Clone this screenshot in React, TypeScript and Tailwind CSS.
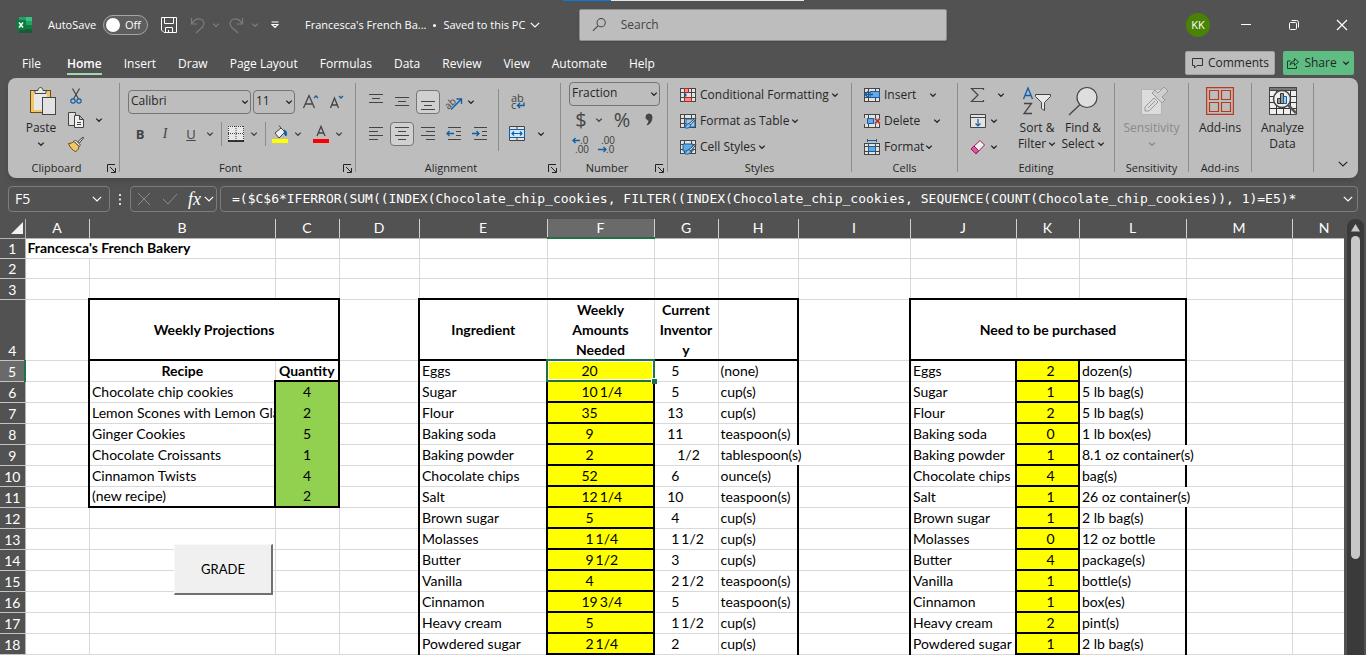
import React from "react";

const ICON = "#444444";
const BLUE = "#0f5ea8";

function Chevron({ className = "", size = 8 }: { className?: string; size?: number }) {
  return (
    <svg className={"shrink-0 " + className} width={size} height={size} viewBox="0 0 8 8" fill="none" stroke="currentColor" strokeWidth={size > 8 ? 0.8 : 1.3} aria-hidden="true">
      <path d="M1.2 2.6 4 5.3 6.8 2.6" />
    </svg>
  );
}

function Svg({ w = 16, h = 16, className = "", children }: { w?: number; h?: number; className?: string; children: React.ReactNode }) {
  return (
    <svg className={"shrink-0 overflow-visible " + className} width={w} height={h} viewBox={`0 0 ${w} ${h}`} fill="none" stroke={ICON} strokeWidth="1" aria-hidden="true">
      {children}
    </svg>
  );
}

function Tool({ label, className = "", children }: { label: string; className?: string; children: React.ReactNode }) {
  return (
    <button type="button" aria-label={label} className={"flex shrink-0 items-center justify-center " + className}>
      {children}
    </button>
  );
}

function TitleBar() {
  return (
    <header className="relative flex h-12 items-center pl-4 pt-0.5 text-xs">
      <div className="absolute left-[563px] top-0 flex h-px w-[241px]">
        <div className="w-12 bg-[#0a78d4]" />
        <div className="flex-1 bg-[#e6e6e6]" />
      </div>
      <svg width="16" height="16" viewBox="0 0 16 16" aria-hidden="true">
        <path d="M3 0h6.500v4H3z" fill="#21a366" />
        <path d="M9.500 0H16v4H9.500z" fill="#33c481" />
        <path d="M3 4h6.500v4H3z" fill="#107c41" />
        <path d="M9.500 4H16v4H9.500z" fill="#21a366" />
        <path d="M3 8h6.500v4H3z" fill="#185c37" />
        <path d="M9.500 8H16v4H9.500z" fill="#107c41" />
        <path d="M3 12h13v4H3z" fill="#185c37" />
        <rect x="0" y="3" width="10" height="10" rx="1" fill="#0f7a40" />
        <path d="M3 5.500 7 10.500M7 5.500 3 10.500" stroke="#fff" strokeWidth="1.500" />
      </svg>
      <label htmlFor="autosave" className="ml-4 w-[55px] whitespace-nowrap text-[11px]">AutoSave</label>
      <button id="autosave" type="button" role="switch" aria-checked="false" className="flex h-5 w-[45px] items-center rounded-full border border-[#a6a6a6] bg-[#5e5e5e] pl-0.5">
        <span className="size-[14px] rounded-full bg-white" />
        <span className="ml-[5px] text-[11px]">Off</span>
      </button>
      <Tool label="Save" className="ml-[13px]">
        <svg width="16" height="16" viewBox="0 0 16 16" fill="none" stroke="#fff" aria-hidden="true">
          <path d="M.5.500h15v15H3L.5 13zM3.500.500v6h9v-6M4.500 15.500v-5h7v5M7.500 13v2.500" />
        </svg>
      </Tool>
      <Tool label="Undo" className="ml-[13px] gap-[7px] text-[#7c7c7c]">
        <svg width="15" height="17" viewBox="0 0 15 17" fill="none" stroke="currentColor" strokeWidth="1.200" aria-hidden="true">
          <path d="M1.500 1v6h6M1.500 7C4 3 7 1.500 10 2c4 1 5 5 2.500 8L6 16" />
        </svg>
        <Chevron />
      </Tool>
      <Tool label="Redo" className="ml-[9px] gap-[7px] text-[#7c7c7c]">
        <svg width="15" height="17" viewBox="0 0 15 17" fill="none" stroke="currentColor" strokeWidth="1.200" aria-hidden="true">
          <path d="M13.500 1v6h-6M13.500 7C11 3 8 1.500 5 2 1 3 0 7 2.500 10L9 16" />
        </svg>
        <Chevron />
      </Tool>
      <Tool label="Customize quick access toolbar" className="ml-3">
        <svg width="8" height="8" viewBox="0 0 8 8" fill="none" stroke="#fff" strokeWidth="1.200" aria-hidden="true">
          <path d="M.5 1h7M1 3.500l3 3 3-3z" />
        </svg>
      </Tool>
      <button type="button" className="ml-[26px] flex w-[242px] items-center whitespace-nowrap text-[11px]">
        Francesca's French Ba...<span className="mx-[7px] size-[3px] rounded-full bg-white" />Saved to this PC
        <Chevron size={12} className="ml-1" />
      </button>
      <label className="ml-8 flex h-8 w-[368px] items-center gap-3.5 rounded-xs border border-[#8e8e8e] bg-[#bdbdbd] px-3 text-[#444] shadow-sm">
        <svg width="16" height="16" viewBox="0 0 16 16" fill="none" stroke="#444" strokeWidth="1.100" aria-hidden="true">
          <circle cx="10" cy="5.500" r="4.500" />
          <path d="M6.500 9 1 14.500" />
        </svg>
        <input type="search" aria-label="Search" placeholder="Search" className="w-full bg-transparent text-xs placeholder:text-[#444] focus:outline-none" />
      </label>
      <div className="ml-auto flex items-center">
        <button type="button" className="mr-[30px] size-6 rounded-full bg-[#498205] text-[11px]">KK</button>
        <Tool label="Minimize" className="mr-8">
          <svg width="12" height="12" viewBox="0 0 12 12" stroke="#fff" aria-hidden="true"><path d="M1 5.500h10" /></svg>
        </Tool>
        <Tool label="Restore" className="ml-1 mr-9">
          <svg width="12" height="12" viewBox="0 0 12 12" fill="none" stroke="#fff" aria-hidden="true">
            <rect x="1.500" y="3.500" width="7" height="7" rx="1" />
            <path d="M3.500 1.500h5a2 2 0 0 1 2 2v5" />
          </svg>
        </Tool>
        <Tool label="Close" className="mr-[18px]">
          <svg width="12" height="12" viewBox="0 0 12 12" stroke="#fff" strokeWidth="1.200" aria-hidden="true"><path d="m1 1 10 10M11 1 1 11" /></svg>
        </Tool>
      </div>
    </header>
  );
}

const TABS = ["File", "Home", "Insert", "Draw", "Page Layout", "Formulas", "Data", "Review", "View", "Automate", "Help"];

function TabBar() {
  return (
    <nav className="flex h-[30px] items-center gap-[22px] pl-[22px] text-xs">
      {TABS.map((tab) =>
        tab === "Home" ? (
          <button key={tab} type="button" className="ml-1 h-6 border-b-2 border-[#9fd9b4] pt-1 font-semibold">{tab}</button>
        ) : (
          <button key={tab} type="button" className="h-6 whitespace-nowrap border-b-2 border-transparent pt-1">{tab}</button>
        ),
      )}
      <div className="ml-auto flex gap-2 pr-3 text-[#262626]">
        <button type="button" className="flex h-6 items-center gap-1 rounded-xs border border-[#a2a2a2] bg-[#bdbdbd] px-[5px]">
          <svg width="13" height="12" viewBox="0 0 13 12" fill="none" stroke="#333" aria-hidden="true"><path d="M1.500 1.500h10v7H6l-2.500 2.500V8.500h-2z" /></svg>
          Comments
        </button>
        <button type="button" className="flex h-6 w-[71px] items-center justify-between rounded-xs bg-[#5fbc82] px-1">
          <svg width="12" height="12" viewBox="0 0 12 12" fill="none" stroke="#1d3b29" aria-hidden="true">
            <path d="M3.500 4H.5v7.500h9V9M3 8c.5-3 2-4 4.500-4V1.500l4 3.500-4 3.500V6C5.500 6 4 6.500 3 8z" />
          </svg>
          Share
          <Chevron />
        </button>
      </div>
    </nav>
  );
}

function Group({ name, className, launcher = false, children }: { name: string; className: string; launcher?: boolean; children?: React.ReactNode }) {
  return (
    <>
      <section aria-label={name} className={"flex shrink-0 flex-col " + className}>
        <div className="h-20">{children}</div>
        <div className="flex h-5 items-center text-[11px]">
          <span className="flex-1 text-center">{name}</span>
          {launcher && (
            <Tool label={name + " settings"} className="mr-0.5 w-3">
              <Svg w={9} h={9}>
                <path d="M.5 8V.5H8M3 3l5 5M8.500 4v4.500H4" stroke="#222" />
              </Svg>
            </Tool>
          )}
        </div>
      </section>
      <div className="mt-[5px] h-[89px] w-px shrink-0 bg-[#8c8c8c]" />
    </>
  );
}

function Combo({ label, value, className }: { label: string; value: string; className: string }) {
  return (
    <div className={"relative h-6 " + className}>
      <select aria-label={label} defaultValue={value} className="block size-full appearance-none rounded-[4px] border border-[#757575] bg-transparent pb-0.5 pl-0.5 text-xs">
        <option>{value}</option>
      </select>
      <Chevron className="pointer-events-none absolute right-0.5 top-2" />
    </div>
  );
}

function BigButton({ lines, chevron = false, className = "", icon }: { lines: string[]; chevron?: boolean; className?: string; icon: React.ReactNode }) {
  return (
    <button type="button" className={"flex flex-col items-center pt-2 text-xs leading-4 " + className}>
      <span className="mb-1 flex h-[30px] items-center">{icon}</span>
      {lines.map((line, i) => (
        <span key={line} className="flex items-center gap-0.5 whitespace-nowrap">
          {line}
          {chevron && i > 0 && <Chevron />}
        </span>
      ))}
      {chevron && lines.length === 1 && <Chevron className="mt-1" />}
    </button>
  );
}

function Bars({ kind }: { kind: "left" | "center" | "right" | "top" | "middle" | "bottom" }) {
  const paths = {
    left: "M1 1.500h14M1 5.500h9M1 9.500h14M1 13.500h9",
    center: "M1 1.500h14M4 5.500h8M1 9.500h14M4 13.500h8",
    right: "M1 1.500h14M6 5.500h9M1 9.500h14M6 13.500h9",
    top: "M1 .5h14M4 4.500h8M1 8.500h14",
    middle: "M1 3.500h14M4 7.500h8M1 11.500h14",
    bottom: "M1 7.500h14M4 11.500h8M1 15.500h14",
  };
  return <Svg><path d={paths[kind]} /></Svg>;
}

function Indent({ flip = false }: { flip?: boolean }) {
  return (
    <Svg>
      <path d="M2 1.500h13M10 5.500h5M10 9.500h5M2 13.500h13" />
      <path d={flip ? "M0 7.500h7M4.500 5 7 7.500 4.500 10" : "M8 7.500H1M3.500 5 1 7.500 3.500 10"} stroke={BLUE} strokeWidth="1.300" />
    </Svg>
  );
}

function GridIcon({ children }: { children?: React.ReactNode }) {
  return (
    <Svg>
      <rect x=".5" y="1.500" width="15" height="13" fill="#e3e3e3" />
      <path d="M.5 5.500h15M.5 10.500h15M4.500 1.500v13M11.500 1.500v13" />
      {children}
    </Svg>
  );
}

function Brush() {
  return (
    <>
      <path d="M15.500 5 9 10.500l1.500 1.500L16 6z" fill="#ddd" stroke="#444" />
      <path d="M9 10.500c-3 0-2 3-4.500 4 3 1.500 6 0 6-2.500z" fill="#8ec0ea" stroke={BLUE} />
    </>
  );
}

function ListButton({ text, icon, chevronClass = "ml-0.5" }: { text: string; icon: React.ReactNode; chevronClass?: string }) {
  return (
    <button type="button" className="flex h-[26px] items-center whitespace-nowrap text-xs">
      {icon}
      <span className="ml-1">{text}</span>
      <Chevron className={chevronClass} />
    </button>
  );
}

const divider = "h-6 w-px bg-[#8c8c8c]";

function Ribbon() {
  return (
    <div className="mx-2 flex h-[100px] rounded-lg bg-[#bdbdbd] text-[#262626] shadow-md">
      <Group name="Clipboard" launcher className="w-[111px]">
        <div className="flex pl-[17px]">
          <BigButton
            lines={["Paste"]}
            chevron
            className="w-8"
            icon={
              <Svg w={28} h={30} className="ml-1">
                <rect x="1.500" y="4.500" width="20" height="22" fill="#f4c66a" stroke="#6b4c16" />
                <rect x="5" y="6" width="13" height="18" fill="#e8e8e8" stroke="none" />
                <path d="M6 7.500v-3h3c0-4 5-4 5 0h3v3z" fill="#e8e8e8" />
                <rect x="13.500" y="11.500" width="13" height="17" fill="#e3e3e3" />
              </Svg>
            }
          />
          <div className="ml-[11px] flex flex-col gap-2 pt-[10px]">
            <Tool label="Cut">
              <Svg>
                <path d="m4.500.5 6 10.500M11.500.5 5.500 11" strokeWidth="1.200" />
                <circle cx="5" cy="13" r="2.200" stroke={BLUE} strokeWidth="1.200" />
                <circle cx="11" cy="13" r="2.200" stroke={BLUE} strokeWidth="1.200" />
              </Svg>
            </Tool>
            <Tool label="Copy">
              <Svg>
                <path d="M.5.500h7v13h-7z" fill="#e3e3e3" />
                <path d="M6.500 3.500h5l4 4v8h-9zM11.500 3.500v4h4M9 10.500h4M9 12.500h4" fill="#efefef" />
              </Svg>
            </Tool>
            <Tool label="Format painter">
              <Svg>
                <path d="M15 1 10 5.500 11.500 7 15.500 2z" fill="#ddd" />
                <path d="m7.500 4 5 5L11 10.500l-5-5z" fill="#efefef" />
                <path d="M6 5.500c-2 1.500-3.500 2-5.500 2C2 12 5 14.500 7.500 15.500c2.500-1 3-3 3.500-5z" fill="#f4c66a" stroke="#6b4c16" />
              </Svg>
            </Tool>
          </div>
          <Tool label="Copy options" className="ml-[11px] h-[84px]"><Chevron /></Tool>
        </div>
      </Group>

      <Group name="Font" launcher className="w-[235px]">
        <div className="flex items-center gap-0.5 pl-2 pt-3">
          <Combo label="Font name" value="Calibri" className="w-[123px]" />
          <Combo label="Font size" value="11" className="w-[42px]" />
          <Tool label="Increase font size" className="ml-1.5">
            <Svg>
              <path d="M.5 14 6 1.500 11.500 14M2.500 10h7" strokeWidth="1.300" />
              <path d="m11 4 2-2 2 2" stroke={BLUE} strokeWidth="1.300" />
            </Svg>
          </Tool>
          <Tool label="Decrease font size" className="ml-2">
            <Svg>
              <path d="M1.500 14 5.500 4l4 10M3 11h5" strokeWidth="1.300" />
              <path d="m10 2 2 2 2-2" stroke={BLUE} strokeWidth="1.300" />
            </Svg>
          </Tool>
        </div>
        <div className="flex h-10 items-center pl-3 text-sm text-[#444]">
          <button type="button" className="w-4 text-[13px] font-bold">B</button>
          <button type="button" className="ml-[9px] w-4 font-['Liberation_Serif',serif] italic">I</button>
          <button type="button" className="ml-[10px] w-4 text-[13px] underline">U</button>
          <Chevron className="ml-[7px]" />
          <div className={"ml-[7px] " + divider} />
          <Tool label="Borders" className="ml-1.5">
            <Svg>
              <rect width="16" height="15" fill="#e8e8e8" stroke="none" />
              <path d="M0 .5h16M.5 0v15M15.500 0v15M8 0v15M0 7.500h16" strokeDasharray="1 1" />
              <path d="M0 15h16" stroke="#000" strokeWidth="1.500" />
            </Svg>
          </Tool>
          <Chevron className="ml-1.5" />
          <div className={"ml-[7px] " + divider} />
          <Tool label="Fill color" className="ml-1.5">
            <Svg h={18}>
              <path d="m3 8 6-5 4 4-6 6zM9 3 7 .500" fill="#eee" />
              <path d="M12 5c3 1 3 4 2 6-1.500-1-1.500-3-2-6z" fill={BLUE} stroke={BLUE} />
              <rect y="14" width="16" height="4" fill="#ff0" stroke="none" />
            </Svg>
          </Tool>
          <Chevron className="ml-1.5" />
          <Tool label="Font color" className="ml-[11px]">
            <Svg h={18}>
              <path d="M4 11 8 1.500 12 11M5.500 8h5" strokeWidth="1.300" />
              <rect y="14" width="16" height="4" fill="#f00" stroke="none" />
            </Svg>
          </Tool>
          <Chevron className="ml-1.5" />
        </div>
      </Group>

      <Group name="Alignment" launcher className="w-[204px]">
        <div className="flex pl-[7px] pt-2">
          <div className="grid grid-cols-[repeat(5,26px)] grid-rows-[32px_32px] place-items-center">
            <Tool label="Top align"><Bars kind="top" /></Tool>
            <Tool label="Middle align"><Bars kind="middle" /></Tool>
            <Tool label="Bottom align" className="size-6 rounded-[4px] border border-[#757575] bg-[#d0d0d0]"><Bars kind="bottom" /></Tool>
            <Tool label="Orientation">
              <Svg>
                <text x="-2" y="13" fontSize="10" fill={ICON} stroke="none" transform="rotate(-42 4 9)" fontFamily="Open Sans">ab</text>
                <path d="M5 15.500 15 5.500M10.500 5H15.500V10" stroke={BLUE} strokeWidth="1.300" />
              </Svg>
            </Tool>
            <Chevron className="justify-self-start" />
            <Tool label="Align left"><Bars kind="left" /></Tool>
            <Tool label="Center" className="size-6 rounded-[4px] border border-[#757575] bg-[#d0d0d0]"><Bars kind="center" /></Tool>
            <Tool label="Align right"><Bars kind="right" /></Tool>
            <Tool label="Decrease indent"><Indent /></Tool>
            <Tool label="Increase indent"><Indent flip /></Tool>
          </div>
          <div className="ml-[5px] mt-[3px] h-[62px] w-px bg-[#8c8c8c]" />
          <div className="ml-[10px]">
            <Tool label="Wrap text" className="h-8">
              <Svg>
                <text fontSize="11" fill={ICON} stroke="none" fontFamily="Open Sans">
                  <tspan x="2" y="8">ab</tspan>
                  <tspan x="2" y="15">c</tspan>
                </text>
                <path d="M15 8.500v3H8.500M11 9l-2.500 2.500L11 14" stroke={BLUE} strokeWidth="1.400" />
              </Svg>
            </Tool>
            <Tool label="Merge and center" className="h-8">
              <Svg>
                <path d="M.5.500h15v14H.500z" fill="#e3e3e3" />
                <path d="M8 .5v3M8 11.500v3" />
                <path d="M.5 3.500h15v8H.5z" fill="#d4e6f5" stroke={BLUE} />
                <path d="M3 7.500h10M5 5.500l-2 2 2 2M11 5.500l2 2-2 2" stroke={BLUE} strokeWidth="1.200" />
              </Svg>
              <Chevron className="ml-3" />
            </Tool>
          </div>
        </div>
      </Group>

      <Group name="Number" launcher className="w-[106px]">
        <div className="pl-2 pt-1">
          <Combo label="Number format" value="Fraction" className="w-[91px]" />
          <div className="flex h-7 items-center pl-1.5 text-xl leading-none text-[#444]">
            <button type="button" className="w-3">$</button>
            <Chevron className="ml-2" />
            <button type="button" className="ml-[9px] w-5">%</button>
            <Tool label="Comma style" className="ml-3">
              <Svg w={10}>
                <path d="M2 5a3 3 0 1 1 6 0c0 4-2 7-5 8 1.500-2 2-3.500 2-5C3 8 2 7 2 5z" fill={ICON} />
              </Svg>
            </Tool>
          </div>
          <div className="flex gap-2 pl-[3px] pt-0.5">
            <Tool label="Increase decimal">
              <Svg w={18} h={18}>
                <text x="8" y="8" fontSize="10" fill={ICON} stroke="none" fontFamily="Liberation Sans">.0</text>
                <text x="3" y="17" fontSize="10" fill={ICON} stroke="none" fontFamily="Liberation Sans">.00</text>
                <path d="M8 4.500H1M3.500 2 1 4.500 3.500 7" stroke={BLUE} strokeWidth="1.300" />
              </Svg>
            </Tool>
            <Tool label="Decrease decimal">
              <Svg w={18} h={18}>
                <text x="3" y="8" fontSize="10" fill={ICON} stroke="none" fontFamily="Liberation Sans">.00</text>
                <text x="8" y="17" fontSize="10" fill={ICON} stroke="none" fontFamily="Liberation Sans">.0</text>
                <path d="M0 13.500h8M5.500 11 8 13.500 5.500 16" stroke={BLUE} strokeWidth="1.300" />
              </Svg>
            </Tool>
          </div>
        </div>
      </Group>

      <Group name="Styles" className="w-[183px]">
        <div className="pl-3 pt-1">
          <ListButton
            text="Conditional Formatting"
            icon={
              <GridIcon>
                <path d="M4.500 1.500h4v4h-4zM4.500 10.500h7v4h-7z" fill="#f28b8b" stroke="#b3261e" />
                <path d="M4.500 6.500h2v3h-2z" fill={BLUE} stroke="none" />
              </GridIcon>
            }
          />
          <ListButton
            text="Format as Table"
            icon={
              <GridIcon>
                <path d="M6 6h9v8H6z" fill="#9ccaf0" stroke={BLUE} />
                <Brush />
              </GridIcon>
            }
          />
          <ListButton
            text="Cell Styles"
            icon={
              <GridIcon>
                <path d="M3 5h10v7H3z" fill="#6aa9e0" stroke={BLUE} />
                <Brush />
              </GridIcon>
            }
          />
        </div>
      </Group>

      <Group name="Cells" className="w-[105px]">
        <div className="pl-3 pt-1">
          <ListButton
            text="Insert"
            chevronClass="ml-[13px]"
            icon={
              <GridIcon>
                <path d="M6 4.500h9.500v6H6z" fill="#6aa9e0" stroke={BLUE} />
                <path d="M9 7.500H1M4 4.500l-3 3 3 3" stroke={BLUE} strokeWidth="1.400" />
              </GridIcon>
            }
          />
          <ListButton
            text="Delete"
            chevronClass="ml-[13px]"
            icon={
              <GridIcon>
                <path d="M0 5h16v6H0z" fill="#bdbdbd" stroke="none" />
                <path d="M3.500 5.500h6v5h-6z" fill="#6aa9e0" stroke={BLUE} />
                <path d="m11 5.500 5 5M16 5.500l-5 5" stroke="#b3261e" strokeWidth="1.400" />
              </GridIcon>
            }
          />
          <ListButton
            text="Format"
            chevronClass="ml-px"
            icon={
              <Svg>
                <rect x=".5" y="4.500" width="15" height="11" fill="#e3e3e3" />
                <path d="M.5 7.500h15M.5 12.500h15M4.500 4v11M11.500 4v11" />
                <path d="M4.500 7.500h7v5h-7z" fill="#6aa9e0" stroke={BLUE} />
                <path d="M3.500 1.500h9M3.500 0v3M12.500 0v3" stroke={BLUE} />
              </Svg>
            }
          />
        </div>
      </Group>

      <Group name="Editing" className="w-[156px]">
        <div className="flex">
          <div className="w-[55px] pl-3 pt-1">
            <Tool label="AutoSum" className="h-[26px] gap-[11px]">
              <Svg><path d="M13.500 3V1.500h-12L8 8l-6.500 6.500h12V13" strokeWidth="1.200" /></Svg>
              <Chevron />
            </Tool>
            <Tool label="Fill" className="h-[26px] gap-1">
              <Svg>
                <path d="M.5 1.500h15v13H.500zM.5 4.500h15" fill="#e3e3e3" />
                <path d="M8 6v7M5.500 10.500 8 13l2.500-2.500" stroke={BLUE} strokeWidth="1.200" />
              </Svg>
              <Chevron />
            </Tool>
            <Tool label="Clear" className="h-[26px] gap-1">
              <Svg>
                <path d="M10 1.500 14.500 6 6 15 1 10z" fill="#efefef" stroke="#a3155f" />
                <path d="M4 7 8.500 11.500 6 15 1 10z" fill="#e055a0" stroke="#a3155f" />
              </Svg>
              <Chevron />
            </Tool>
          </div>
          <BigButton
            lines={["Sort &", "Filter"]}
            chevron
            className="w-12"
            icon={
              <Svg w={28} h={30}>
                <path d="M.5 13 5 2l4.500 11M2 9.500h6" stroke={BLUE} strokeWidth="1.300" />
                <path d="M1 17.500h7.500L1 27.500h8" strokeWidth="1.300" />
                <path d="M12.500 8.500h15v2l-6 6v8l-3-2v-6l-6-6z" fill="#e8e8e8" />
              </Svg>
            }
          />
          <BigButton
            lines={["Find &", "Select"]}
            chevron
            className="w-11"
            icon={
              <Svg w={30} h={30}>
                <circle cx="19" cy="11.500" r="10" fill="#dedede" strokeWidth="1.200" />
                <path d="M12 18.500 1 29" strokeWidth="1.300" />
              </Svg>
            }
          />
        </div>
      </Group>

      <Group name="Sensitivity" className="w-[73px]">
        <BigButton
          lines={["Sensitivity"]}
          chevron
          className="w-full text-[#8a8a8a]"
          icon={
            <Svg w={28} h={30} className="ml-1">
              <path d="M1.500 3.500h20v25h-20z" fill="#dcdcdc" stroke="#b4b4b4" />
              <path d="m5 21 9-9 4 4-9 9H5zM8 22l7-7" fill="#dcdcdc" stroke="#9a9a9a" />
              <path d="m12 7 3-3 3 3 6-6 4 4-6 6 3 3-3 3z" fill="#cfcfcf" stroke="#9a9a9a" />
            </Svg>
          }
        />
      </Group>

      <Group name="Add-ins" className="w-[62px]">
        <BigButton
          lines={["Add-ins"]}
          className="w-full"
          icon={
            <svg width="28" height="28" viewBox="0 0 28 28" fill="none" stroke="#b8391b" strokeWidth="1.200" aria-hidden="true">
              <path d="M.6.600h26.800v26.800H.600zM3.500 3.500h9v9h-9zM15.500 3.500h9v9h-9zM3.500 15.500h9v9h-9zM15.500 15.500h9v9h-9z" />
            </svg>
          }
        />
      </Group>

      <Group name="" className="w-[61px]">
        <BigButton
          lines={["Analyze", "Data"]}
          className="w-full"
          icon={
            <Svg w={28} h={28}>
              <path d="M.5.500h27v27H.500z" fill="#efefef" />
              <path d="M.5.500h27v3H.500z" fill="#777" />
              <path d="M0 9.500h28M0 15.500h28M0 21.500h28M7.500 4v24M14.500 4v24M21.500 4v24" stroke="#333" />
              <circle cx="13" cy="12" r="8.500" fill="#efefef" strokeWidth="1.500" />
              <path d="m19 18 8 8" stroke="#555" strokeWidth="2.500" />
              <path d="M8.500 11.500h3v5h-3zM11.500 6.500h3v10h-3z" fill="#999" stroke="#333" />
              <path d="M14.500 9.500h3v7h-3z" fill="#9fd0f5" stroke={BLUE} />
            </Svg>
          }
        />
      </Group>
      <div className="ml-auto flex items-end pb-2 pr-[9px]">
        <Tool label="Collapse ribbon"><Chevron size={12} /></Tool>
      </div>
    </div>
  );
}

const FORMULA =
  "=($C$6*IFERROR(SUM((INDEX(Chocolate_chip_cookies, FILTER((INDEX(Chocolate_chip_cookies, SEQUENCE(COUNT(Chocolate_chip_cookies)), 1)=E5)*";

function FormulaBar() {
  const box = "flex h-[26px] items-center rounded-[4px] border border-[#7c7c7c]";
  return (
    <div className="flex px-2 pb-[7px] pt-2">
      <div className={box + " w-[102px] px-1.5"}>
        <input aria-label="Name box" defaultValue="F5" className="w-full bg-transparent text-sm focus:outline-none" />
        <Chevron size={12} />
      </div>
      <svg className="mx-2 mt-2" width="4" height="12" viewBox="0 0 4 12" fill="#ddd" aria-hidden="true">
        <path d="M1 0h2v2H1zM1 4.500h2v2H1zM1 9h2v2H1z" />
      </svg>
      <div className={box + " w-[87px] justify-between pl-1.5 pr-px"}>
        <Tool label="Cancel">
          <svg width="14" height="14" viewBox="0 0 14 14" stroke="#8c8c8c" aria-hidden="true"><path d="m1 1 12 12M13 1 1 13" /></svg>
        </Tool>
        <Tool label="Enter">
          <svg width="16" height="14" viewBox="0 0 16 14" fill="none" stroke="#8c8c8c" aria-hidden="true"><path d="m1 7 5 5L15 2" /></svg>
        </Tool>
        <button type="button" className="flex items-center font-['Liberation_Serif',serif] text-lg italic leading-5">
          fx
          <Chevron size={12} className="ml-0.5" />
        </button>
      </div>
      <div className={box + " ml-[3px] flex-1 pl-[11px] pr-[3px]"}>
        <input aria-label="Formula" defaultValue={FORMULA} className="w-full bg-transparent font-['DejaVu_Sans_Mono',monospace] text-[13px] focus:outline-none" />
        <Chevron size={12} />
      </div>
    </div>
  );
}

type Cell = {
  text?: React.ReactNode;
  span?: number;
  right?: "thick" | "none";
  bottom?: "thick" | "none";
  look?: string;
};

const COLUMNS: [string, string][] = [
  ["A", "w-[64px]"], ["B", "w-[186px]"], ["C", "w-[64px]"], ["D", "w-[80px]"], ["E", "w-[128px]"],
  ["F", "w-[107px]"], ["G", "w-[64px]"], ["H", "w-[80px]"], ["I", "w-[112px]"], ["J", "w-[106px]"],
  ["K", "w-[63px]"], ["L", "w-[107px]"], ["M", "w-[106px]"], ["N", "w-[64px]"],
];

const RECIPES: [string, string][] = [
  ["Chocolate chip cookies", "4"],
  ["Lemon Scones with Lemon Glaze", "2"],
  ["Ginger Cookies", "5"],
  ["Chocolate Croissants", "1"],
  ["Cinnamon Twists", "4"],
  ["(new recipe)", "2"],
];

// ingredient, needed, on hand, unit, quantity to buy, package
const INGREDIENTS: [string, string, string, string, string, string][] = [
  ["Eggs", "20", "5", "(none)", "2", "dozen(s)"],
  ["Sugar", "10 1/4", "5", "cup(s)", "1", "5 lb bag(s)"],
  ["Flour", "35", "13", "cup(s)", "2", "5 lb bag(s)"],
  ["Baking soda", "9", "11", "teaspoon(s)", "0", "1 lb box(es)"],
  ["Baking powder", "2", " 1/2", "tablespoon(s)", "1", "8.1 oz container(s)"],
  ["Chocolate chips", "52", "6", "ounce(s)", "4", "bag(s)"],
  ["Salt", "12 1/4", "10", "teaspoon(s)", "1", "26 oz container(s)"],
  ["Brown sugar", "5", "4", "cup(s)", "1", "2 lb bag(s)"],
  ["Molasses", "1 1/4", "1 1/2", "cup(s)", "0", "12 oz bottle"],
  ["Butter", "9 1/2", "3", "cup(s)", "4", "package(s)"],
  ["Vanilla", "4", "2 1/2", "teaspoon(s)", "1", "bottle(s)"],
  ["Cinnamon", "19 3/4", "5", "teaspoon(s)", "1", "box(es)"],
  ["Heavy cream", "5", "1 1/2", "cup(s)", "2", "pint(s)"],
  ["Powdered sugar", "2 1/4", "2", "cup(s)", "1", "2 lb bag(s)"],
];

function Fraction({ value }: { value: string }) {
  const [whole, part] = value.split(" ");
  return (
    <span className="inline-flex">
      {whole}
      <span className="w-[22px] pl-0.5 text-left">{part}</span>
    </span>
  );
}

function ingredientCells(i: number): Cell[] {
  const [name, needed, stock, unit, buy, pack] = INGREDIENTS[i];
  const yellow = "bg-[#ffff00] text-center";
  return [
    { text: name, right: "thick", look: "pl-[2px]" },
    {
      text: (
        <>
          <Fraction value={needed} />
          {i === 0 && (
            <span className="absolute -inset-0.5 border-2 border-[#1f7244] shadow-[inset_0_0_0_1px_#fff]">
              <span className="absolute -bottom-1 -right-1 size-1.5 border-l border-t border-white bg-[#1f7244]" />
            </span>
          )}
        </>
      ),
      right: "thick",
      bottom: "thick",
      look: yellow + (i === 0 ? " relative" : ""),
    },
    { text: <Fraction value={stock} />, look: "text-center" },
    { text: unit, right: unit.length > 11 ? "none" : "thick", look: "pl-[2px]" },
    { right: "thick" },
    { text: name, right: "thick", look: "pl-[2px]" },
    { text: buy, right: "thick", bottom: "thick", look: yellow + " pl-1.5" },
    { text: pack, right: pack.includes("container") ? "none" : "thick", look: "pl-[2px]" },
    {},
    {},
  ];
}

function rowCells(row: number): Cell[] {
  const blank = (n: number): Cell[] => Array.from({ length: n }, () => ({}));
  if (row === 1) return [{ text: <b>Francesca's French Bakery</b>, right: "none", look: "pl-[2px]" }, ...blank(13)];
  if (row === 2) return blank(14);
  if (row === 3) {
    return blank(14).map((cell, i) => ([1, 2, 4, 5, 6, 7, 9, 10, 11].includes(i) ? { bottom: "thick" as const } : cell));
  }
  if (row === 4) {
    const head = "text-center font-bold leading-5";
    return [
      { right: "thick" },
      { text: "Weekly Projections", span: 2, right: "thick", bottom: "thick", look: head },
      { right: "thick" },
      { text: "Ingredient", bottom: "thick", look: head },
      { text: <div className="-my-px">Weekly<br />Amounts<br />Needed</div>, bottom: "thick", look: head },
      { text: <div className="-my-px">Current<br />Inventor<br />y</div>, bottom: "thick", look: head },
      { right: "thick", bottom: "thick" },
      { right: "thick" },
      { text: "Need to be purchased", span: 3, right: "thick", bottom: "thick", look: head },
      {},
      {},
    ];
  }
  let left: Cell[];
  if (row === 5) {
    left = [
      { right: "thick" },
      { text: "Recipe", look: "text-center font-bold" },
      { text: "Quantity", right: "thick", bottom: "thick", look: "text-center font-bold" },
    ];
  } else if (row <= 11) {
    const [recipe, count] = RECIPES[row - 6];
    const last = row === 11;
    left = [
      { right: "thick" },
      { text: recipe, right: "thick", bottom: last ? "thick" : undefined, look: "overflow-hidden pl-[2px]" },
      { text: count, right: "thick", bottom: last ? "thick" : "none", look: "bg-[#92d050] text-center" },
    ];
  } else {
    left = blank(3);
  }
  return [...left, { right: "thick" }, ...ingredientCells(row - 5)];
}

function edges(cell: Cell) {
  const right = cell.right === "thick" ? "border-r-2 border-r-black" : cell.right === "none" ? "" : "border-r border-r-[#d9d9d9]";
  const bottom = cell.bottom === "thick" ? "border-b-2 border-b-black" : cell.bottom === "none" ? "" : "border-b border-b-[#d9d9d9]";
  return right + " " + bottom;
}

function rowHeight(row: number) {
  if (row <= 2) return "h-[20px]";
  if (row === 4) return "h-[61px]";
  return "h-[21px]";
}

function Sheet() {
  return (
    <div className="relative min-w-0 flex-1 overflow-hidden bg-white font-[Lato,sans-serif] text-[14px] text-black">
      <table className="w-[1356px] table-fixed border-collapse">
        <thead>
          <tr className="h-[19px] bg-[#525252] leading-[18px] text-white">
            <th className="w-[25px] border-b border-r border-[#b4b4b4] p-0">
              <svg className="ml-auto mr-0.5" width="12" height="12" viewBox="0 0 12 12" aria-label="Select all"><path d="M12 0v12H0z" fill="#f2f2f2" /></svg>
            </th>
            {COLUMNS.map(([name, width]) => (
              <th
                key={name}
                scope="col"
                className={
                  "border-r p-0 font-normal border-r-[#d0d0d0] " + width +
                  (name === "F" ? " border-b-2 bg-[#6a6a6a] border-b-[#1f7244]" : " border-b border-b-[#b4b4b4]")
                }
              >
                {name}
              </th>
            ))}
          </tr>
        </thead>
        <tbody>
          {Array.from({ length: 18 }, (_, i) => i + 1).map((row) => (
            <tr key={row} className={rowHeight(row) + " leading-[18px]"}>
              <th
                scope="row"
                className={
                  "border-b border-b-[#c4c4c4] p-0 align-bottom font-normal text-white " +
                  (row === 5 ? "border-r-2 border-r-[#1f7244] bg-[#6a6a6a]" : "border-r border-r-[#b4b4b4] bg-[#525252]")
                }
              >
                {row}
              </th>
              {rowCells(row).map((cell, i) => (
                <td key={i} colSpan={cell.span} className={"whitespace-nowrap p-0 " + edges(cell) + " " + (cell.look ?? "")}>
                  {cell.text}
                </td>
              ))}
            </tr>
          ))}
        </tbody>
      </table>
      <button
        type="button"
        className="absolute left-[174px] top-[325px] h-[51px] w-[99px] border border-b-2 border-r-2 border-[#f8f8f8] border-b-[#707070] border-r-[#707070] bg-[#f0f0f0] pt-0.5 text-[13px]"
      >
        GRADE
      </button>
    </div>
  );
}

function ScrollBar() {
  return (
    <div className="flex w-[22px] pl-[3px]">
      <div className="flex w-[17px] flex-col items-center rounded-t-lg bg-[#3a3a3a] pt-[5px]">
        <svg width="9" height="8" viewBox="0 0 9 8" aria-hidden="true"><path d="M4.500 0 9 7.500H0z" fill="#c8c8c8" /></svg>
        <div className="mt-1 h-3/4 w-[9px] rounded-full bg-[#c8c8c8]" />
      </div>
    </div>
  );
}

export default function App() {
  return (
    <div className="flex h-screen flex-col overflow-hidden bg-[#525252] font-['Open_Sans',sans-serif] text-white">
      <TitleBar />
      <TabBar />
      <Ribbon />
      <FormulaBar />
      <main className="flex min-h-0 flex-1">
        <Sheet />
        <ScrollBar />
      </main>
    </div>
  );
}
